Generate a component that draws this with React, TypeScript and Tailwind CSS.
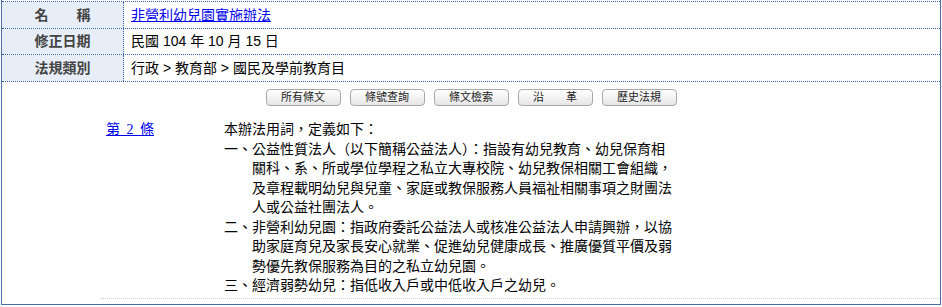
const info = [
  { label: "名　　稱", value: "非營利幼兒園實施辦法", link: true, h: "h-[26px]" },
  { label: "修正日期", value: "民國 104 年 10 月 15 日", link: false, h: "h-[25px]" },
  { label: "法規類別", value: "行政 > 教育部 > 國民及學前教育目", link: false, h: "h-[26px]" }
];

const buttons = ["所有條文", "條號查詢", "條文檢索", "沿　　革", "歷史法規"];

const lines: { text: string; indent: boolean }[] = [
  { text: "本辦法用詞，定義如下：", indent: false },
  { text: "一、公益性質法人（以下簡稱公益法人）：指設有幼兒教育、幼兒保育相", indent: false },
  { text: "關科、系、所或學位學程之私立大專校院、幼兒教保相關工會組織，", indent: true },
  { text: "及章程載明幼兒與兒童、家庭或教保服務人員福祉相關事項之財團法", indent: true },
  { text: "人或公益社團法人。", indent: true },
  { text: "二、非營利幼兒園：指政府委託公益法人或核准公益法人申請興辦，以協", indent: false },
  { text: "助家庭育兒及家長安心就業、促進幼兒健康成長、推廣優質平價及弱", indent: true },
  { text: "勢優先教保服務為目的之私立幼兒園。", indent: true },
  { text: "三、經濟弱勢幼兒：指低收入戶或中低收入戶之幼兒。", indent: false }
];

export default function App() {
  return (
    <div className="h-[307px] w-[942px] bg-white">
      <div className="ml-px h-[305px] w-[940px] border-x border-b border-[#4a6ea8] pt-px">
        <div className="border-t border-dotted border-[#3a62a8]">
          {info.map((row) => (
            <div key={row.label} className="grid grid-cols-[122px_1fr] border-b border-dotted border-[#3a62a8]">
              <div className={`${row.h} flex items-center justify-center border-r border-dotted border-[#3a62a8] bg-[#e8eef7] font-['Liberation_Sans','Noto_Sans_CJK_TC',sans-serif] text-[14px] font-bold text-[#444]`}>
                {row.label}
              </div>
              <div className="flex items-center pl-[7px] font-['Liberation_Sans','Noto_Sans_CJK_TC',sans-serif] text-[14px] text-black">
                {row.link ? (
                  <a href="#" className="text-[#0000ee] underline">
                    {row.value}
                  </a>
                ) : (
                  row.value
                )}
              </div>
            </div>
          ))}
        </div>

        <div className="flex justify-center gap-[9px] pt-[7px]">
          {buttons.map((b) => (
            <button
              key={b}
              className="flex h-[17px] w-[75px] items-center justify-center rounded-[4px] border border-[#a8a8a8] bg-gradient-to-b from-white to-[#e6e6e6] font-['Liberation_Sans','Noto_Sans_CJK_TC',sans-serif] text-[11px] leading-none text-[#222]"
            >
              {b}
            </button>
          ))}
        </div>

        <div className="ml-[99px] mt-[14px] grid grid-cols-[123px_1fr] border-b border-dotted border-[#c8c8c8] pb-[2px] font-['Liberation_Serif','Noto_Sans_CJK_TC',serif] text-[14px] leading-[19.5px] text-black">
          <div className="pl-[5px]">
            <a href="#" className="text-[#0000ee] underline [word-spacing:3px]">
              第 2 條
            </a>
          </div>
          <div>
            {lines.map((l, i) => (
              <div key={i} className={l.indent ? "pl-[28px]" : ""}>
                {l.text}
              </div>
            ))}
          </div>
        </div>
      </div>
    </div>
  );
}
